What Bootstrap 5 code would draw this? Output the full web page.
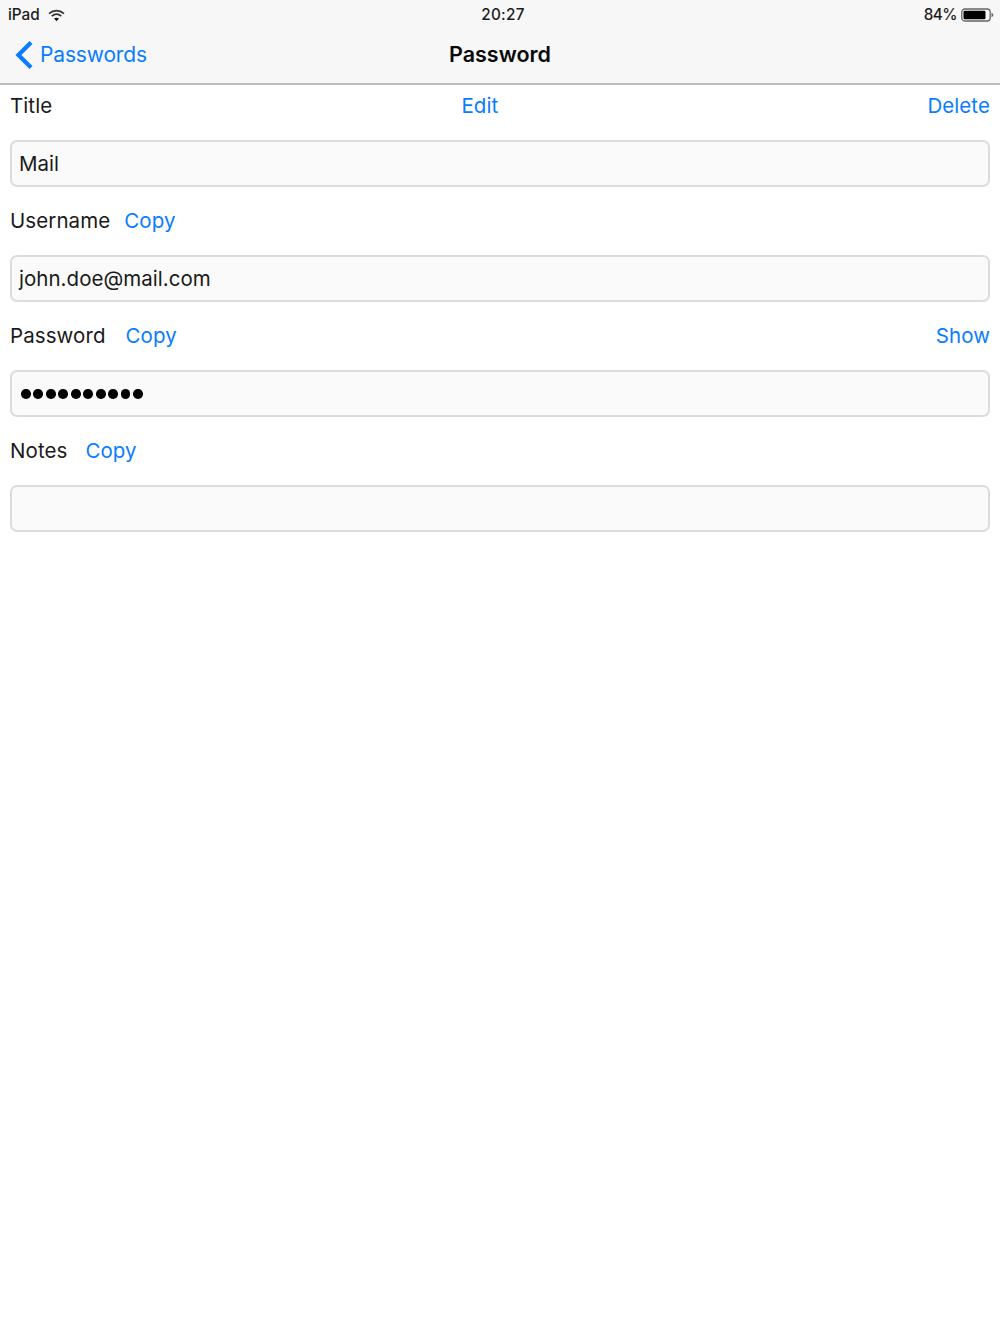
<!DOCTYPE html>
<html lang="en"><head><meta charset="utf-8"><title>Password</title>
<link href="https://cdn.jsdelivr.net/npm/bootstrap@5.3.0/dist/css/bootstrap.min.css" rel="stylesheet">
<style>
html,body{height:100%;background:#fff;overflow:hidden}
body{font-family:Inter,"Liberation Sans",sans-serif;color:#111}
.top-bar{background:#f7f7f7;border-bottom:2px solid #bdbdbd;height:85px}
.status-row{height:28px;padding:2px 6px 0 8px;font-size:15.300px;font-weight:500;color:#1c1c1c}
.status-side{width:200px}
.clock{margin-left:4px;letter-spacing:.25px}
.batt-pct{letter-spacing:-.5px}
.nav-row{height:54px}
.nav-side{width:200px;color:#0a7cff;font-size:21px;letter-spacing:-.15px;padding-left:15px;gap:7px}
.nav-title{font-size:21.500px;font-weight:600;color:#0a0a0a;padding-bottom:2px}
.form-area{padding:0 10px}
.label-row{height:45px;padding-bottom:2px;font-size:20.500px;letter-spacing:.08px}
.label-row a{color:#0a7cff;text-decoration:none}
.name-cell{color:#1a1a1a}
.gap-user{margin-right:14px}.gap-pass{margin-right:20px}.gap-note{margin-right:18px}
.edit-link{margin-right:20px}
.field-box{height:47px;background:#fafafa;border:2px solid #dcdcdc;border-radius:7px;padding:1px 7px 0;font-size:20.500px;letter-spacing:.03px;color:#1a1a1a;margin-bottom:13px;margin-top:10px;display:flex;align-items:center}
.dots{display:flex;gap:2.900px;padding-left:2px}
.dots i{display:block;width:9.600px;height:9.600px;background:#000;border-radius:50%}
</style></head><body>
<header class="top-bar">
 <div class="status-row d-flex align-items-center justify-content-between">
  <div class="status-side d-flex align-items-center gap-2"><span>iPad</span>
   <svg width="17" height="13" viewBox="0 0 17 13"><path d="M1 4.600C5.500.6 11.500.6 16 4.600" fill="none" stroke="#333" stroke-width="1.700"/><path d="M3.700 7.200C6.700 4.600 10.300 4.600 13.300 7.200" fill="none" stroke="#333" stroke-width="1.700"/><path d="M6 9.600c1.500-1.200 3.500-1.200 5 0L8.500 12.300z" fill="#111"/></svg></div>
  <span class="clock">20:27</span>
  <div class="status-side d-flex align-items-center justify-content-end gap-1"><span class="batt-pct">84%</span>
   <svg width="33" height="14" viewBox="0 0 33 14"><rect x=".8" y="1" width="28.400" height="12" rx="3" fill="none" stroke="#666" stroke-width="1.300"/><rect x="2.500" y="2.700" width="22" height="8.600" rx="1.300" fill="#000"/><path d="M30.500 5v4c1.300-.3 1.800-1 1.800-2s-.5-1.700-1.800-2z" fill="#666"/></svg></div>
 </div>
 <nav class="nav-row d-flex align-items-center justify-content-between">
  <div class="nav-side d-flex align-items-center">
   <svg width="18" height="28" viewBox="0 0 18 28"><path d="M16 1.500 3.400 14 16 26.500" fill="none" stroke="#0a7cff" stroke-width="4.200"/></svg><span>Passwords</span></div>
  <div class="nav-title">Password</div>
  <div class="nav-side"></div>
 </nav>
</header>
<main class="form-area">
 <div class="label-row d-flex align-items-center justify-content-between"><span class="name-cell">Title</span><a href="#" class="edit-link">Edit</a><a href="#">Delete</a></div>
 <div class="field-box">Mail</div>
 <div class="label-row d-flex align-items-center justify-content-between"><div class="d-flex"><span class="name-cell gap-user">Username</span><a href="#">Copy</a></div></div>
 <div class="field-box">john.doe@mail.com</div>
 <div class="label-row d-flex align-items-center justify-content-between"><div class="d-flex"><span class="name-cell gap-pass">Password</span><a href="#">Copy</a></div><a href="#">Show</a></div>
 <div class="field-box"><div class="dots"><i></i><i></i><i></i><i></i><i></i><i></i><i></i><i></i><i></i><i></i></div></div>
 <div class="label-row d-flex align-items-center justify-content-between"><div class="d-flex"><span class="name-cell gap-note">Notes</span><a href="#">Copy</a></div></div>
 <div class="field-box"></div>
</main>
<script src="https://cdn.jsdelivr.net/npm/bootstrap@5.3.0/dist/js/bootstrap.bundle.min.js"></script>
</body></html>
